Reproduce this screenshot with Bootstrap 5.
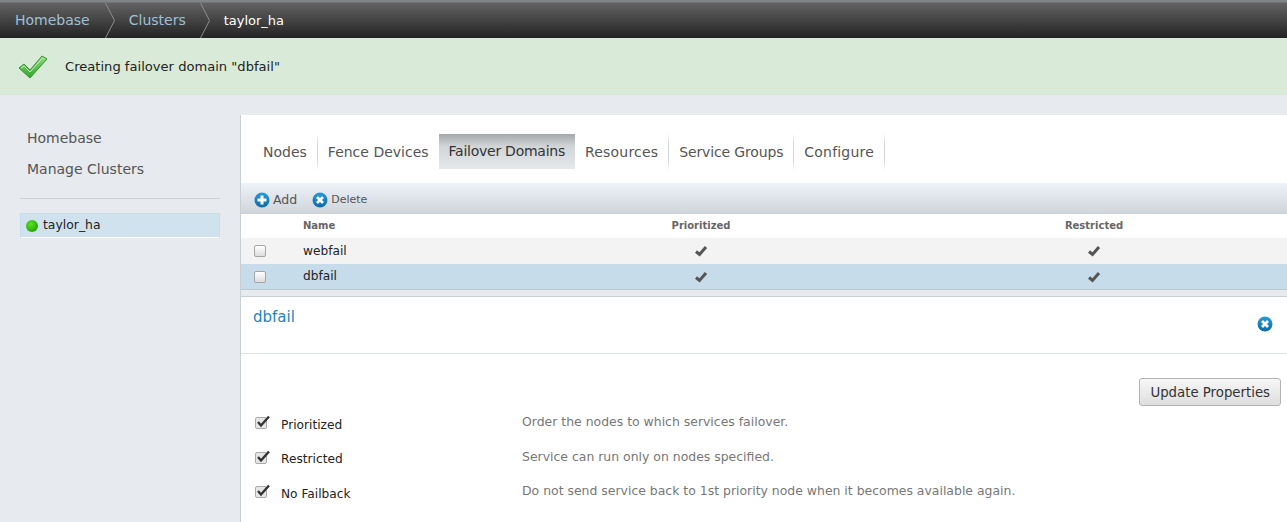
<!doctype html>
<html lang="en"><head><meta charset="utf-8"><title>taylor_ha</title>
<link href="https://cdn.jsdelivr.net/npm/bootstrap@5.3.0/dist/css/bootstrap.min.css" rel="stylesheet">
<style>
html,body{height:522px;overflow:hidden}
body{font-family:"DejaVu Sans",sans-serif;font-size:13px;background:#e7eaee;color:#222;line-height:1.2}
.topbar{height:38px;padding-top:3px;background:linear-gradient(#7f8488 0,#7f8488 2px,#626262 3px,#232323 100%)}
.crumb{height:35px;display:flex;align-items:center;font-size:14px;padding-left:15px}
.crumb a{color:#9cc0d8;text-decoration:none}
.crumb .cur{color:#fff;font-size:13px}
.chev{width:10px;height:35px;display:block;flex:none;margin:0 14px 0 15px}
.chev.two{margin-left:14px}
.notice{height:57px;background:#d9ebd8;color:#222;font-size:13.1px;gap:17px;padding-left:18px}
.shell{height:427px;overflow:hidden}
.sidebar{width:240px;flex:none;padding:20px 20px 0}
.sidelink{display:block;color:#555;text-decoration:none;padding-left:7px;height:31px;line-height:46px;font-size:14px}
.sidesep{border-top:1px solid #cdd2d6;margin:21px 0 14px;height:0}
.clusteritem{height:25px;background:#d0e2ee;border:1px solid #c8dce9;border-bottom-color:#fff;gap:5px;padding-left:5px;color:#222;font-size:12.4px}
.dot{width:12px;height:12px;border-radius:50%;background:radial-gradient(circle at 40% 35%,#5ee02a,#21a800 75%);flex:none}
.mainarea{flex:1;border-left:1px solid #c9ced3;margin-top:20px;min-width:0}
.tabstrip{height:68px;background:#fff;padding:19px 0 0 12px;align-items:flex-start}
.tabx{height:36px;color:#555;font-size:14px;padding:0 10px;display:flex;align-items:center;text-decoration:none;border-right:1px solid;border-image:linear-gradient(#fff,#d3d6d9 30%,#d3d6d9 70%,#fff) 1}
.tabx.on{background:linear-gradient(#a4a8ab,#d1d5d8 35%,#e6e9ec);color:#333;border-right:0;height:35px;letter-spacing:-.25px;margin-left:-1px}
.tabx.wide{letter-spacing:.2px}
.tabx.tight{letter-spacing:-.15px}
.toolbar{height:31px;background:linear-gradient(#eef2f9,#cfd4da);gap:15px;padding:2px 0 0 13px;color:#555;font-size:12.5px}
.toolbar .it{display:flex;align-items:center;gap:3px}
.toolbar .small-it{font-size:11px}
.ico{display:block;flex:none}
.gridrow{display:grid;grid-template-columns:62px 300px 196px 197px 196px 1fr;align-items:center}
.ghead{height:24px;background:#fff;font-size:10px;font-weight:700;color:#666}
.grow{height:26px;font-size:12.2px;color:#222}
.grow.a{background:#f3f3f3}
.grow.b{background:#c7dcea;border-bottom:1px solid #bfc9d0}
.ctr{text-align:center}
.cbx{width:12px;height:12px;border:1px solid #a5a5a5;border-radius:2px;background:linear-gradient(#fff,#dcdcdc);margin-left:13px;display:block}
.tk{display:block;margin:0 auto}
.panel{margin-top:6px;background:#fff;border-top:1px solid #c9ced3;height:240px}
.panelhead{height:57px;border-bottom:1px solid #dde3e8;padding:11px 14px 0 12px}
.panelhead h2{font-size:15px;line-height:18px;font-weight:400;color:#1a84c3;margin:0}
.panelhead svg{margin-top:8px}
.btnrow{padding:24px 6px 0 0;height:52px}
.updbtn{font-size:13.3px;color:#333;border:1px solid #b3b3b3;border-radius:3px;background:linear-gradient(#f7f7f7,#dedede);padding:2px 10px 0;height:28px;line-height:24px}
.optrow{display:grid;grid-template-columns:26px 241px 1fr;height:34.5px;align-items:center;padding-left:14px;font-size:12.2px;color:#222}
.optlabel{padding-top:4px}
.optnote{color:#777;font-size:12.45px;padding-bottom:1px}
.optcb{width:16px;height:14px;display:block;margin-top:-2px}
</style></head>
<body>
<svg width="0" height="0" class="d-block"><defs><linearGradient id="gbl" x1="0" y1="0" x2="0" y2="1"><stop offset="0" stop-color="#2a9ad8"/><stop offset="1" stop-color="#0a6aa8"/></linearGradient></defs></svg>
<div class="topbar"><div class="crumb">
<a href="#">Homebase</a>
<svg class="chev" viewBox="0 0 10 35"><path d="M.5 0 L9.500 17.500 L.5 35" fill="none" stroke="#8a8c8e"/></svg>
<a href="#">Clusters</a>
<svg class="chev two" viewBox="0 0 10 35"><path d="M.5 0 L9.500 17.500 L.5 35" fill="none" stroke="#8a8c8e"/></svg>
<span class="cur">taylor_ha</span>
</div></div>
<div class="notice d-flex align-items-center">
<svg width="30" height="24" viewBox="0 0 30 24"><defs><linearGradient id="gck" x1="0" y1="0" x2="0" y2="1"><stop offset="0" stop-color="#8fe07a"/><stop offset="1" stop-color="#2ea52a"/></linearGradient></defs><path d="M1 13 L6 9 L12 15 L24 1 L29 4 L12 23 Z" fill="url(#gck)" stroke="#3b8f35"/><path d="M3 13 L6 11 L12 17 L24.500 3 L26 4" fill="none" stroke="#c5f0ba"/></svg>
<span>Creating failover domain "dbfail"</span>
</div>
<div class="shell d-flex">
<div class="sidebar">
<a class="sidelink" href="#">Homebase</a>
<a class="sidelink" href="#">Manage Clusters</a>
<div class="sidesep"></div>
<div class="clusteritem d-flex align-items-center"><span class="dot"></span><span>taylor_ha</span></div>
</div>
<div class="mainarea">
<div class="tabstrip d-flex">
<a class="tabx" href="#">Nodes</a><a class="tabx" href="#">Fence Devices</a><a class="tabx on" href="#">Failover Domains</a><a class="tabx wide" href="#">Resources</a><a class="tabx tight" href="#">Service Groups</a><a class="tabx wide" href="#">Configure</a>
</div>
<div class="toolbar d-flex align-items-center">
<span class="it"><svg class="ico" width="16" height="16" viewBox="0 0 16 16"><circle cx="8" cy="8" r="7.500" fill="url(#gbl)"/><path d="M8 3.500v9M3.500 8h9" stroke="#fff" stroke-width="3"/></svg>Add</span>
<span class="it small-it"><svg class="ico" width="16" height="16" viewBox="0 0 16 16"><circle cx="8" cy="8" r="7.500" fill="url(#gbl)"/><path d="M5 5l6 6M11 5l-6 6" stroke="#fff" stroke-width="2.800"/></svg>Delete</span>
</div>
<div class="gridrow ghead"><span></span><span>Name</span><span class="ctr">Prioritized</span><span></span><span class="ctr">Restricted</span><span></span></div>
<div class="gridrow grow a"><span class="cbx"></span><span>webfail</span><svg class="tk" width="14" height="12" viewBox="0 0 14 12"><path d="M2 6.500 L5.500 9.500 L12 2" fill="none" stroke="#555" stroke-width="3"/></svg><span></span><svg class="tk" width="14" height="12" viewBox="0 0 14 12"><path d="M2 6.500 L5.500 9.500 L12 2" fill="none" stroke="#555" stroke-width="3"/></svg><span></span></div>
<div class="gridrow grow b"><span class="cbx"></span><span>dbfail</span><svg class="tk" width="14" height="12" viewBox="0 0 14 12"><path d="M2 6.500 L5.500 9.500 L12 2" fill="none" stroke="#555" stroke-width="3"/></svg><span></span><svg class="tk" width="14" height="12" viewBox="0 0 14 12"><path d="M2 6.500 L5.500 9.500 L12 2" fill="none" stroke="#555" stroke-width="3"/></svg><span></span></div>
<div class="panel">
<div class="panelhead d-flex justify-content-between align-items-start"><h2>dbfail</h2><svg class="ico" width="16" height="16" viewBox="0 0 16 16"><circle cx="8" cy="8" r="7.500" fill="url(#gbl)"/><path d="M5 5l6 6M11 5l-6 6" stroke="#fff" stroke-width="2.800"/></svg></div>
<div class="btnrow d-flex justify-content-end align-items-start"><button class="updbtn" type="button">Update Properties</button></div>
<div class="optrow"><svg class="optcb" viewBox="0 0 16 14"><rect x=".5" y="2.500" width="11" height="11" rx="1.500" fill="#e6e6e6" stroke="#aaa"/><path d="M3 7l3 3.500 8-9" fill="none" stroke="#333" stroke-width="2.400"/></svg><span class="optlabel">Prioritized</span><span class="optnote">Order the nodes to which services failover.</span></div>
<div class="optrow"><svg class="optcb" viewBox="0 0 16 14"><rect x=".5" y="2.500" width="11" height="11" rx="1.500" fill="#e6e6e6" stroke="#aaa"/><path d="M3 7l3 3.500 8-9" fill="none" stroke="#333" stroke-width="2.400"/></svg><span class="optlabel">Restricted</span><span class="optnote">Service can run only on nodes specified.</span></div>
<div class="optrow"><svg class="optcb" viewBox="0 0 16 14"><rect x=".5" y="2.500" width="11" height="11" rx="1.500" fill="#e6e6e6" stroke="#aaa"/><path d="M3 7l3 3.500 8-9" fill="none" stroke="#333" stroke-width="2.400"/></svg><span class="optlabel">No Failback</span><span class="optnote">Do not send service back to 1st priority node when it becomes available again.</span></div>
</div>
</div>
</div>
<script src="https://cdn.jsdelivr.net/npm/bootstrap@5.3.0/dist/js/bootstrap.bundle.min.js"></script>
</body></html>
